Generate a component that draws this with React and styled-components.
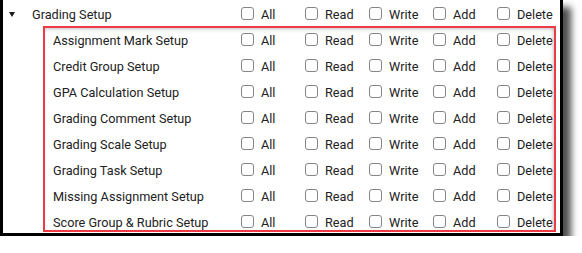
import React from "react";
import styled, { createGlobalStyle } from "styled-components";

const perms = ["All", "Read", "Write", "Add", "Delete"];

const tools = [
  "Assignment Mark Setup",
  "Credit Group Setup",
  "GPA Calculation Setup",
  "Grading Comment Setup",
  "Grading Scale Setup",
  "Grading Task Setup",
  "Missing Assignment Setup",
  "Score Group & Rubric Setup",
];

const GlobalStyle = createGlobalStyle`
  body {
    margin: 0;
    background: #fff;
    font-family: Roboto, "Liberation Sans", sans-serif;
  }
`;

const Frame = styled.div`
  width: 557px;
  height: 233px;
  border: 3px solid #000;
  border-top: none;
  background: #fff;
  box-shadow: 8px 7px 7px 0 rgba(0, 0, 0, 0.7);
`;

const HeaderRow = styled.div`
  display: grid;
  grid-template-columns: 23px 209px repeat(5, 64px);
  align-items: center;
  height: 24px;
  padding: 2px 0 0 6px;
`;

const Caret = styled.span`
  width: 0;
  height: 0;
  border-left: 3.5px solid transparent;
  border-right: 3.5px solid transparent;
  border-top: 5px solid #1a1a1a;
  margin-top: 1px;
`;

const Highlight = styled.div`
  margin-left: 40px;
  width: 509px;
  height: 202px;
  border: 2px solid #ee3a43;
  overflow: hidden;
  box-shadow: inset 0 3px 4px -2px rgba(0, 0, 0, 0.22),
    inset -3px 0 4px -2px rgba(0, 0, 0, 0.18);
`;

const ToolRow = styled.div`
  display: grid;
  grid-template-columns: 188px repeat(5, 64px);
  align-items: center;
  height: 24px;
  padding: 0 0 2px 8px;
`;

const Label = styled.span`
  font-size: 12.7px;
  color: #222;
  white-space: nowrap;
`;

const Perm = styled.label`
  display: flex;
  align-items: center;
  gap: 7px;
  font-size: 12.7px;
  color: #222;
  white-space: nowrap;
`;

const Box = styled.input`
  appearance: none;
  margin: 0 0 1px;
  width: 13px;
  height: 13px;
  border: 1px solid #858585;
  border-radius: 3px;
  background: #fff;
  flex: none;
`;

const PermCells = () =>
  perms.map((p) => (
    <Perm key={p}>
      <Box type="checkbox" />
      {p}
    </Perm>
  ));

export default function App() {
  return (
    <>
      <GlobalStyle />
      <Frame>
        <HeaderRow>
          <Caret />
          <Label>Grading Setup</Label>
          <PermCells />
        </HeaderRow>
        <Highlight>
          {tools.map((t) => (
            <ToolRow key={t}>
              <Label>{t}</Label>
              <PermCells />
            </ToolRow>
          ))}
        </Highlight>
      </Frame>
    </>
  );
}
